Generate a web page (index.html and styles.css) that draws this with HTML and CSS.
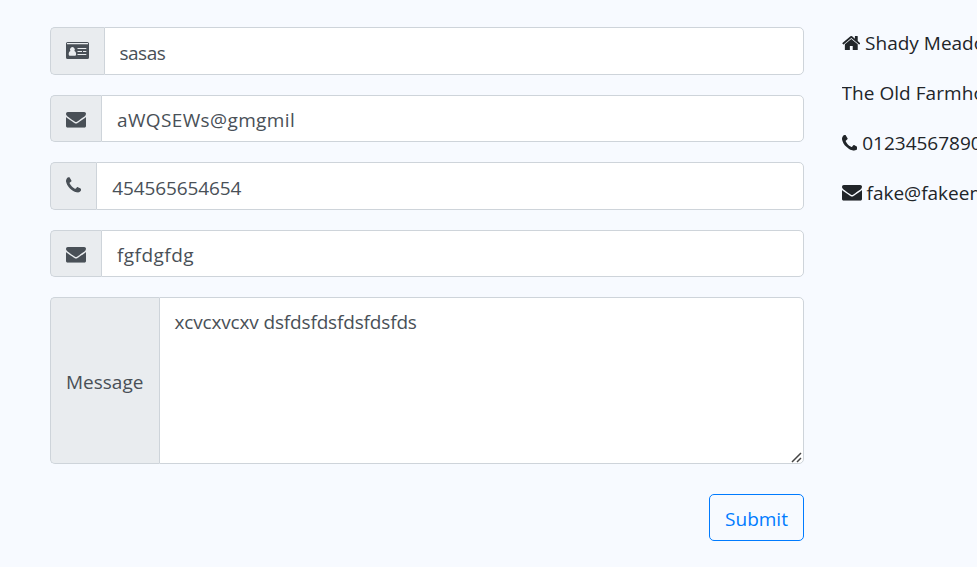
FILE: index.html
```
<!DOCTYPE html>
<html lang="en">
<head>
<meta charset="utf-8">
<title>Contact</title>
<link rel="stylesheet" href="styles.css">
</head>
<body>
<svg class="sprite" aria-hidden="true">
  <symbol id="envelope" viewBox="0 256 1792 1408"><path d="M1792 710v794q0 66-47 113t-113 47h-1472q-66 0-113-47t-47-113v-794q44 49 101 87 362 246 497 345 57 42 92.500 65.500t94.500 48 110 24.500h2q51 0 110-24.500t94.500-48 92.500-65.500q170-123 498-345 57-39 100-87zm0-294q0 79-49 151t-122 123q-376 261-468 325-10 7-42.500 31t-54 38.500-52 32.500-57.500 27-50 9h-2q-23 0-50-9t-57.500-27-52-32.500-54-38.500-42.500-31q-91-64-262-182.500t-205-142.500q-62-42-117-115.500t-55-136.500q0-78 41.500-130t118.500-52h1472q65 0 112.500 47t47.500 113z"/></symbol>
  <symbol id="phone" viewBox="192 128 1408 1408"><path d="M1600 1240q0 27-10 70.500t-21 68.500q-21 50-122 106-94 51-186 51-27 0-52.500-3.500t-57.500-12.500-47.500-14.500-55.500-20.500-49-18q-98-35-175-83-128-79-264.500-215.500t-215.500-264.500q-48-77-83-175-3-9-18-49t-20.500-55.500-14.500-47.500-12.500-57.500-3.500-52.500q0-92 51-186 56-101 106-122 25-11 68.500-21t70.500-10q14 0 21 3 18 6 53 76 11 19 30 54t35 63.500 31 53.500q3 4 17.500 25t21.500 35.500 7 28.500q0 20-28.500 50t-62 55-62 53-28.500 46q0 9 5 22.500t8.500 20.500 14 24 11.500 19q76 137 174 235t235 174q2 1 19 11.500t24 14 20.500 8.500 22.500 5q18 0 46-28.500t53-62 55-62 50-28.500q14 0 28.500 7t35.500 21.500 25 17.500q25 15 53.500 31t63.500 35 54 30q70 35 76 53 3 7 3 21z"/></symbol>
  <symbol id="home" viewBox="64 248 1664 1288"><path d="M1472 992v480q0 26-19 45t-45 19h-384v-384h-256v384h-384q-26 0-45-19t-19-45v-480q0-1 .5-3t.5-3l575-474 575 474q1 2 1 6zm223-69l-62 74q-8 9-21 11h-3q-13 0-21-7l-692-577-692 577q-12 8-24 7-13-2-21-11l-62-74q-8-10-7-23.500t11-21.500l719-599q32-26 76-26t76 26l244 204v-195q0-14 9-23t23-9h192q14 0 23 9t9 23v408l219 182q10 8 11 21.500t-7 23.500z"/></symbol>
  <symbol id="card" viewBox="0 0 23 17"><path fill-rule="evenodd" d="M1.600 0h19.800Q23 0 23 1.600v13.800Q23 17 21.400 17H1.600Q0 17 0 15.400V1.600Q0 0 1.600 0zM1 1.100v1.100h21v-1.100zM4.400 9.100C3.100 9.500 2.700 11 2.700 12.300q0 1.500 1.200 1.500h5q1.200 0 1.200-1.500c0-1.300-.4-2.800-1.700-3.200A2.400 2.500 0 1 0 4.400 9.100zM11.500 6v1.100h8.800V6zM11.500 9v1.100h4.500V9zM17 9v1.100h3.300V9zM11.500 12v1.100h8.800v-1.100z"/></symbol>
</svg>
<main class="contact">
  <form class="form">
    <div class="group">
      <label class="addon" for="name"><svg class="icon card"><use href="#card"/></svg></label>
      <input class="control name" id="name" type="text" value="sasas">
    </div>
    <div class="group">
      <label class="addon" for="email"><svg class="icon envelope"><use href="#envelope"/></svg></label>
      <input class="control email" id="email" type="text" value="aWQSEWs@gmgmil">
    </div>
    <div class="group">
      <label class="addon" for="phone-number"><svg class="icon phone"><use href="#phone"/></svg></label>
      <input class="control number" id="phone-number" type="text" value="454565654654">
    </div>
    <div class="group">
      <label class="addon" for="subject"><svg class="icon envelope"><use href="#envelope"/></svg></label>
      <input class="control subject" id="subject" type="text" value="fgfdgfdg">
    </div>
    <div class="group message">
      <label class="addon" for="description">Message</label>
      <textarea class="control" id="description" spellcheck="false">xcvcxvcxv dsfdsfdsfdsfdsfds</textarea>
      <svg class="grip" viewBox="0 0 11 11"><path d="M1 10 10 1M6 10 10 6"/></svg>
    </div>
    <button class="submit" type="button">Submit</button>
  </form>
  <address class="details">
    <p class="line"><svg class="icon home"><use href="#home"/></svg><span class="place">Shady Meado</span></p>
    <p class="line"><span class="street">The Old Farmho</span></p>
    <p class="line"><svg class="icon phone"><use href="#phone"/></svg><span class="tel">01234567890</span></p>
    <p class="line"><svg class="icon envelope"><use href="#envelope"/></svg><span class="mail">fake@fakeem</span></p>
  </address>
</main>
</body>
</html>
```
FILE: styles.css
```
* { box-sizing: border-box; }
body {
  margin: 0;
  height: 567px;
  overflow: hidden;
  background: #f7faff;
  color: #212529;
  font: 19px/30px "Open Sans", "Noto Sans", sans-serif;
}
.sprite { display: none; }
.contact { display: flex; gap: 37.500px; padding: 27px 0 0 50px; }
.form { display: flex; flex-direction: column; gap: 20px; width: 754px; flex: none; }
.group { display: flex; height: 47.500px; }
.addon {
  display: flex;
  align-items: center;
  flex: none;
  padding: 0 15px;
  border: 1px solid #ced4da;
  border-right: 0;
  border-radius: 5px 0 0 5px;
  background: #e9ecef;
  color: #495057;
}
.control {
  flex: 1;
  min-width: 0;
  margin: 0;
  padding: 4px 15px 0;
  border: 1px solid #ced4da;
  border-radius: 0 5px 5px 0;
  background: #fff;
  color: #495057;
  font: inherit;
  outline: 0;
}
.name { padding: 5px 14.500px 0; letter-spacing: -.5px; }
.email { letter-spacing: .37px; }
.number { padding-top: 5px; letter-spacing: -.1px; }
.subject { letter-spacing: .45px; }
.icon { display: block; flex: none; fill: currentColor; }
.card { width: 23px; height: 17px; }
.envelope { width: 20px; height: 15.700px; }
.phone { width: 15.700px; height: 15.700px; }
.home { width: 18.600px; height: 14.400px; }
.addon .envelope { margin-top: 3px; }
.addon .phone { width: 15.200px; margin-bottom: 1px; }
.message { position: relative; height: 167px; }
.message .addon { width: 109px; padding-top: 2px; }
.message .control { padding: 9px 14.500px 0; letter-spacing: -.16px; resize: none; }
.grip {
  position: absolute;
  right: 2px;
  bottom: 1px;
  width: 11px;
  height: 11px;
  fill: none;
  stroke: #444;
  stroke-width: 1.500;
}
.submit {
  align-self: flex-end;
  width: 95px;
  height: 47px;
  margin-top: 10px;
  padding: 3px 0 0;
  border: 1px solid #007bff;
  border-radius: 5px;
  background: transparent;
  color: #007bff;
  font: inherit;
}
.details { flex: 1; min-width: 0; overflow: hidden; font-style: normal; }
.line { display: flex; align-items: center; gap: 5px; height: 30px; margin: 1px 0 20px; white-space: nowrap; }
.line + .line { margin-top: 0; }
.street { letter-spacing: .05px; }
```
